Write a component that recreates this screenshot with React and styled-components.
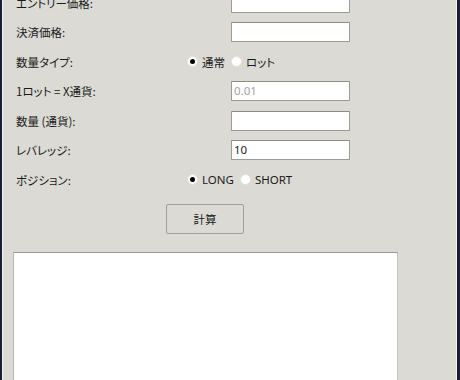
import styled, { createGlobalStyle } from 'styled-components';

const GlobalStyle = createGlobalStyle`
  html, body {
    margin: 0;
    padding: 0;
    height: 100%;
    overflow: hidden;
  }
  body {
    background: #dcdad5;
    font-family: "Noto Sans CJK JP", "Noto Sans", sans-serif;
    font-feature-settings: "palt" 1;
  }
`;

const Window = styled.div`
  width: 460px;
  height: 380px;
  box-sizing: border-box;
  background: #dcdad5;
  border-left: 2px solid #1c1d33;
  border-right: 3px solid #1c1d33;
  box-shadow: inset 1px 0 0 #f4f3f0, inset -1px 0 0 #f4f3f0;
  overflow: hidden;
`;

const Form = styled.div`
  margin-top: -12px;
  padding-left: 14px;
  display: flex;
  flex-direction: column;
`;

const Row = styled.div`
  height: 29.5px;
  display: flex;
  align-items: center;
`;

const Label = styled.div`
  width: ${p => p.$width || 215}px;
  font-size: 11.5px;
  color: #1a1a1a;
  white-space: nowrap;
`;

const Input = styled.div`
  width: 119px;
  height: 20px;
  box-sizing: border-box;
  background: #fff;
  border: 1px solid #9c9a94;
  border-top-color: #8e8c86;
  border-radius: 1px;
  font-size: 11.5px;
  line-height: 18px;
  padding-left: 2px;
  color: ${p => (p.$muted ? '#a2a2a2' : '#222')};
  font-family: "Noto Sans", sans-serif;
`;

const RadioGroup = styled.div`
  display: flex;
  align-items: center;
  gap: 6px;
`;

const RadioItem = styled.label`
  display: flex;
  align-items: center;
  gap: 4px;
  font-size: ${p => (p.$latin ? 11.5 : 11.5)}px;
  color: #1a1a1a;
  font-family: ${p => (p.$latin ? '"Noto Sans", sans-serif' : 'inherit')};
`;

const Dot = styled.span`
  width: 11px;
  height: 11px;
  border-radius: 50%;
  background: #fff;
  box-sizing: border-box;
  border: 1px solid #e2e1dc;
  display: flex;
  align-items: center;
  justify-content: center;
  &::after {
    content: '';
    width: 5px;
    height: 5px;
    border-radius: 50%;
    background: ${p => (p.$on ? '#000' : 'transparent')};
  }
`;

const ButtonRow = styled.div`
  display: flex;
  padding-left: 150px;
  margin-top: 9px;
`;

const Button = styled.button`
  width: 78px;
  height: 30px;
  background: #dcdad5;
  border: 1px solid #a09e98;
  border-radius: 2px;
  font-family: "Noto Sans CJK JP", sans-serif;
  font-size: 11.5px;
  color: #1a1a1a;
  padding: 0;
`;

const Output = styled.div`
  margin: 18px 0 0 11px;
  width: 383px;
  height: 200px;
  background: #fff;
  border-top: 1px solid #9c9a94;
  border-left: 1px solid #b8b6b0;
  border-right: 1px solid #c8c6c0;
`;

function Radio({ options, selected, latin }) {
  return (
    <RadioGroup>
      {options.map(o => (
        <RadioItem key={o} $latin={latin}>
          <Dot $on={o === selected} />
          {o}
        </RadioItem>
      ))}
    </RadioGroup>
  );
}

export default function App() {
  return (
    <>
      <GlobalStyle />
      <Window>
        <Form>
          <Row><Label>エントリー価格:</Label><Input /></Row>
          <Row><Label>決済価格:</Label><Input /></Row>
          <Row>
            <Label $width={171}>数量タイプ:</Label>
            <Radio options={['通常', 'ロット']} selected="通常" />
          </Row>
          <Row><Label>1ロット = X通貨:</Label><Input $muted>0.01</Input></Row>
          <Row><Label>数量 (通貨):</Label><Input /></Row>
          <Row><Label>レバレッジ:</Label><Input>10</Input></Row>
          <Row>
            <Label $width={171}>ポジション:</Label>
            <Radio options={['LONG', 'SHORT']} selected="LONG" latin />
          </Row>
          <ButtonRow><Button>計算</Button></ButtonRow>
        </Form>
        <Output />
      </Window>
    </>
  );
}
